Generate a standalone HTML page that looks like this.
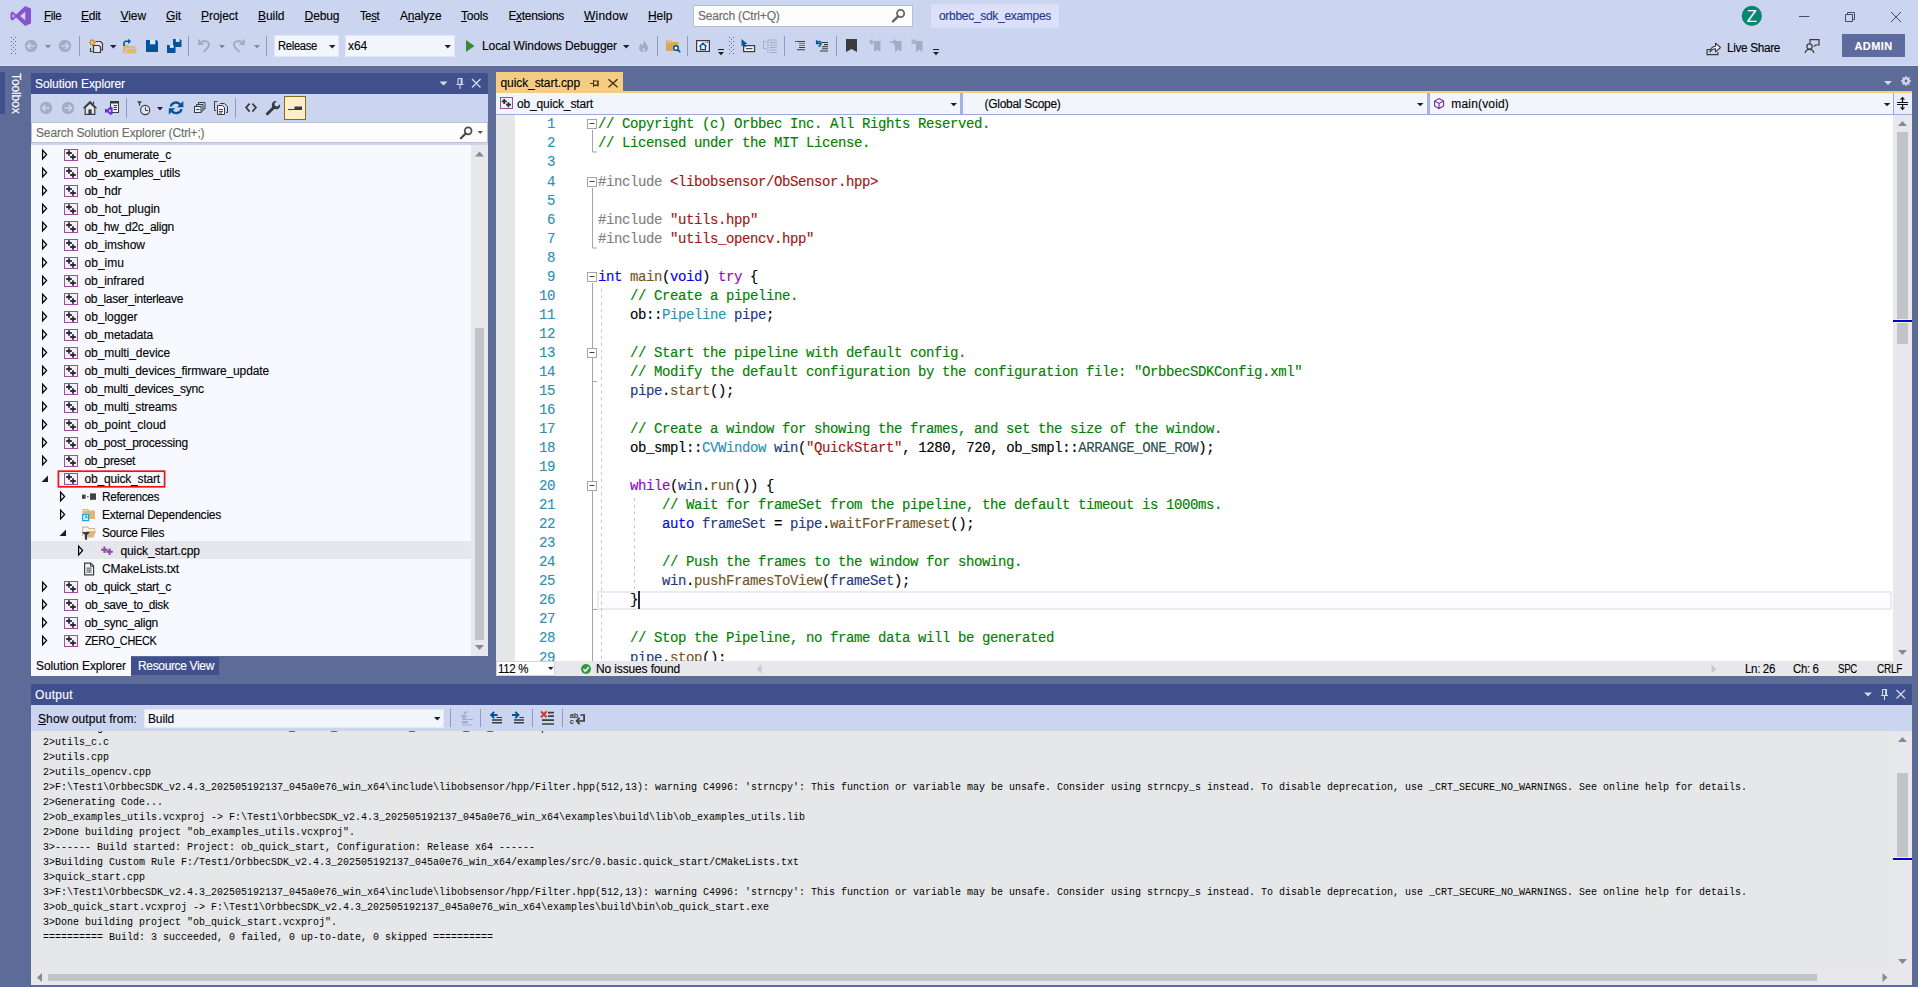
<!DOCTYPE html>
<html lang="en"><head><meta charset="utf-8"><title>orbbec_sdk_exampes - Microsoft Visual Studio</title>
<style>
html,body{margin:0;padding:0;overflow:hidden;}
body{width:1918px;height:987px;overflow:hidden;background:#5d6b99;position:relative;font-family:"Liberation Sans", sans-serif;font-size:12px;}
#r{position:absolute;left:0;top:0;width:1918px;height:987px;overflow:hidden;}
#r div,#r span,#r svg{position:absolute;}
#r svg{overflow:visible;}
.ts,.tm,.to{white-space:pre;line-height:0;height:0;}
.ts{font-family:"Liberation Sans", sans-serif;font-size:12px;margin-top:-4.2px;-webkit-text-stroke:0.12px;}
.tm{font-family:"Liberation Mono", monospace;margin-top:-3.6px;-webkit-text-stroke:0.14px;}
.to{font-family:"Liberation Mono", monospace;margin-top:-3px;transform-origin:0 0;}
.ts i,.tm i,.to i{font-style:normal;}
#r .ts span,#r .tm span,#r .to span,#r u{position:static;}
u{text-decoration:underline;text-underline-offset:1px;}
</style></head>
<body><div id="r">
<div style="left:0px;top:0px;width:1918px;height:66px;background:#ccd5f0;"></div>
<div style="left:0px;top:65px;width:1918px;height:1px;background:#d5dcf2;"></div>
<span class="ts" style="letter-spacing:-0.350px;transform:scaleX(0.9744);transform-origin:0 0;left:43.5px;top:20px;color:#000000;"><u>F</u>ile</span>
<span class="ts" style="letter-spacing:-0.276px;left:81px;top:20px;color:#000000;"><u>E</u>dit</span>
<span class="ts" style="letter-spacing:-0.103px;left:120.6px;top:20px;color:#000000;"><u>V</u>iew</span>
<span class="ts" style="letter-spacing:-0.115px;left:166px;top:20px;color:#000000;"><u>G</u>it</span>
<span class="ts" style="letter-spacing:-0.051px;left:201px;top:20px;color:#000000;"><u>P</u>roject</span>
<span class="ts" style="letter-spacing:-0.061px;left:258px;top:20px;color:#000000;"><u>B</u>uild</span>
<span class="ts" style="letter-spacing:-0.115px;left:304.6px;top:20px;color:#000000;"><u>D</u>ebug</span>
<span class="ts" style="letter-spacing:-0.350px;transform:scaleX(0.9403);transform-origin:0 0;left:360px;top:20px;color:#000000;">Te<u>s</u>t</span>
<span class="ts" style="letter-spacing:-0.188px;left:400px;top:20px;color:#000000;">A<u>n</u>alyze</span>
<span class="ts" style="letter-spacing:-0.203px;left:461px;top:20px;color:#000000;"><u>T</u>ools</span>
<span class="ts" style="letter-spacing:-0.312px;left:508.4px;top:20px;color:#000000;">E<u>x</u>tensions</span>
<span class="ts" style="letter-spacing:0.219px;left:584px;top:20px;color:#000000;"><u>W</u>indow</span>
<span class="ts" style="letter-spacing:-0.072px;left:648px;top:20px;color:#000000;"><u>H</u>elp</span>
<div style="left:693px;top:5px;width:220px;height:22px;background:#fdfdfd;box-sizing:border-box;border:1px solid #b5bdd3;box-shadow:inset 0 0 0 1px #fff;"></div>
<span class="ts" style="letter-spacing:-0.184px;left:698px;top:20px;color:#6a6a6a;">Search (Ctrl+Q)</span>
<div style="left:931px;top:4px;width:128px;height:24px;background:#dce0f8;box-sizing:border-box;border:1px solid #d6dcf4;"></div>
<span class="ts" style="letter-spacing:-0.300px;left:939px;top:20px;color:#263a8c;">orbbec_sdk_exampes</span>
<div style="left:274px;top:35px;width:64.5px;height:21.5px;background:#f2f5fc;box-sizing:border-box;border:1px solid #e2e7f8;"></div>
<span class="ts" style="letter-spacing:-0.350px;transform:scaleX(0.9379);transform-origin:0 0;left:278px;top:50.5px;color:#000000;">Release</span>
<div style="left:345px;top:35px;width:110px;height:21.5px;background:#f2f5fc;box-sizing:border-box;border:1px solid #e2e7f8;"></div>
<span class="ts" style="letter-spacing:-0.120px;left:348px;top:50.5px;color:#000000;">x64</span>
<span class="ts" style="letter-spacing:-0.080px;left:482px;top:50.5px;color:#000000;">Local Windows Debugger</span>
<span class="ts" style="letter-spacing:-0.350px;transform:scaleX(0.9838);transform-origin:0 0;left:1727px;top:52px;color:#000000;">Live Share</span>
<div style="left:1842px;top:34px;width:63px;height:23px;background:#5d6b9e;"></div>
<span class="ts" style="letter-spacing:0.388px;left:1854.5px;top:50px;color:#ffffff;font-size:11px;font-weight:bold;margin-top:-3.8px;">ADMIN</span>
<div style="left:0px;top:72px;width:5px;height:42px;background:#40508d;"></div>
<span class="ts" style="left:16px;top:72.5px;color:#fff;transform-origin:0 0;transform:rotate(90deg);margin-top:0;letter-spacing:-0.12px">Toolbox</span>
<div style="left:31px;top:73px;width:457px;height:21px;background:#40508d;"></div>
<span class="ts" style="letter-spacing:-0.082px;left:35px;top:88px;color:#ffffff;">Solution Explorer</span>
<div style="left:31px;top:94px;width:457px;height:28px;background:#ccd5f0;"></div>
<div style="left:31px;top:122px;width:457px;height:21px;background:#fdfdfd;box-sizing:border-box;border:1px solid #b9c1d6;box-shadow:inset 0 0 0 1px #fff;"></div>
<span class="ts" style="letter-spacing:-0.139px;left:36px;top:137px;color:#6a6a6a;">Search Solution Explorer (Ctrl+;)</span>
<div style="left:31px;top:143px;width:457px;height:2px;background:#ccd5f0;"></div>
<div style="left:31px;top:145px;width:457px;height:511px;background:#f7f9fe;"></div>
<div style="left:471px;top:145px;width:17px;height:511px;background:#e8e8ec;"></div>
<div style="left:475px;top:328px;width:9px;height:312px;background:#c2c3c9;"></div>
<span class="ts" style="letter-spacing:-0.256px;left:84.5px;top:159.5px;color:#000000;">ob_enumerate_c</span>
<span class="ts" style="letter-spacing:-0.230px;left:84.5px;top:177.5px;color:#000000;">ob_examples_utils</span>
<span class="ts" style="letter-spacing:-0.062px;left:84.5px;top:195.5px;color:#000000;">ob_hdr</span>
<span class="ts" style="letter-spacing:0.007px;left:84.5px;top:213.5px;color:#000000;">ob_hot_plugin</span>
<span class="ts" style="letter-spacing:-0.261px;left:84.5px;top:231.5px;color:#000000;">ob_hw_d2c_align</span>
<span class="ts" style="letter-spacing:-0.023px;left:84.5px;top:249.5px;color:#000000;">ob_imshow</span>
<span class="ts" style="letter-spacing:0.023px;left:84.5px;top:267.5px;color:#000000;">ob_imu</span>
<span class="ts" style="letter-spacing:-0.111px;left:84.5px;top:285.5px;color:#000000;">ob_infrared</span>
<span class="ts" style="letter-spacing:-0.329px;left:84.5px;top:303.5px;color:#000000;">ob_laser_interleave</span>
<span class="ts" style="letter-spacing:-0.043px;left:84.5px;top:321.5px;color:#000000;">ob_logger</span>
<span class="ts" style="letter-spacing:-0.142px;left:84.5px;top:339.5px;color:#000000;">ob_metadata</span>
<span class="ts" style="letter-spacing:-0.081px;left:84.5px;top:357.5px;color:#000000;">ob_multi_device</span>
<span class="ts" style="letter-spacing:-0.134px;left:84.5px;top:375.5px;color:#000000;">ob_multi_devices_firmware_update</span>
<span class="ts" style="letter-spacing:-0.232px;left:84.5px;top:393.5px;color:#000000;">ob_multi_devices_sync</span>
<span class="ts" style="letter-spacing:-0.139px;left:84.5px;top:411.5px;color:#000000;">ob_multi_streams</span>
<span class="ts" style="letter-spacing:0.007px;left:84.5px;top:429.5px;color:#000000;">ob_point_cloud</span>
<span class="ts" style="letter-spacing:-0.218px;left:84.5px;top:447.5px;color:#000000;">ob_post_processing</span>
<span class="ts" style="letter-spacing:-0.319px;left:84.5px;top:465.5px;color:#000000;">ob_preset</span>
<span class="ts" style="letter-spacing:-0.182px;left:84.5px;top:483.5px;color:#000000;">ob_quick_start</span>
<span class="ts" style="letter-spacing:-0.350px;transform:scaleX(0.9849);transform-origin:0 0;left:102px;top:501.5px;color:#000000;">References</span>
<span class="ts" style="letter-spacing:-0.242px;left:102px;top:519.5px;color:#000000;">External Dependencies</span>
<span class="ts" style="letter-spacing:-0.350px;transform:scaleX(0.9920);transform-origin:0 0;left:102px;top:537.5px;color:#000000;">Source Files</span>
<div style="left:31px;top:541px;width:440px;height:18px;background:#e6e7ed;"></div>
<span class="ts" style="letter-spacing:-0.075px;left:120.4px;top:555.5px;color:#000000;">quick_start.cpp</span>
<span class="ts" style="letter-spacing:-0.121px;left:102px;top:573.5px;color:#000000;">CMakeLists.txt</span>
<span class="ts" style="letter-spacing:-0.265px;left:84.5px;top:591.5px;color:#000000;">ob_quick_start_c</span>
<span class="ts" style="letter-spacing:-0.350px;transform:scaleX(0.9843);transform-origin:0 0;left:84.5px;top:609.5px;color:#000000;">ob_save_to_disk</span>
<span class="ts" style="letter-spacing:-0.249px;left:84.5px;top:627.5px;color:#000000;">ob_sync_align</span>
<span class="ts" style="letter-spacing:-0.350px;transform:scaleX(0.9106);transform-origin:0 0;left:84.5px;top:645.5px;color:#000000;">ZERO_CHECK</span>
<div style="left:31px;top:656px;width:100px;height:20px;background:#f7f9fe;"></div>
<span class="ts" style="letter-spacing:-0.082px;left:36px;top:670px;color:#000000;">Solution Explorer</span>
<div style="left:131px;top:657px;width:88px;height:18px;background:#40508d;"></div>
<span class="ts" style="letter-spacing:-0.345px;left:138px;top:670px;color:#ffffff;">Resource View</span>
<div style="left:496px;top:72px;width:127px;height:20px;background:#f5cc84;"></div>
<span class="ts" style="letter-spacing:-0.081px;left:500.5px;top:87px;color:#000000;">quick_start.cpp</span>
<div style="left:496px;top:91px;width:1416px;height:2px;background:#f5cc84;"></div>
<div style="left:496px;top:93px;width:1416px;height:22px;background:#f2f5fc;"></div>
<div style="left:496px;top:113.5px;width:1416px;height:1.5px;background:#9aaade;"></div>
<div style="left:960px;top:93px;width:3px;height:21px;background:#a3b1de;"></div>
<div style="left:1426.5px;top:93px;width:3px;height:21px;background:#a3b1de;"></div>
<div style="left:1893px;top:93px;width:19px;height:20.5px;background:#e9eefc;box-sizing:border-box;border-left:1px solid #9aaade;"></div>
<span class="ts" style="letter-spacing:-0.146px;left:517px;top:108px;color:#000000;">ob_quick_start</span>
<span class="ts" style="letter-spacing:-0.289px;left:984.5px;top:108px;color:#000000;">(Global Scope)</span>
<span class="ts" style="letter-spacing:0.168px;left:1451.3px;top:108px;color:#000000;">main(void)</span>
<div style="left:496px;top:115px;width:1397px;height:546px;background:#ffffff;"></div>
<div style="left:496px;top:115px;width:18.5px;height:546px;background:#e6e7e8;"></div>
<div style="left:1893px;top:115px;width:19px;height:546px;background:#e8e8ec;"></div>
<div style="left:1897px;top:132px;width:11px;height:212px;background:#c2c3c9;"></div>
<div style="left:1893px;top:319px;width:19px;height:4px;background:#f4f4e4;"></div>
<div style="left:1893px;top:320px;width:19px;height:2px;background:#0000cd;"></div>
<div style="left:496px;top:661px;width:1416px;height:15px;background:#e8e8ec;"></div>
<div style="left:496px;top:661px;width:59px;height:15px;background:#ffffff;box-sizing:border-box;border:1px solid #cfd3e6;"></div>
<span class="ts" style="letter-spacing:-0.350px;transform:scaleX(0.9557);transform-origin:0 0;left:498px;top:673px;color:#000000;">112 %</span>
<span class="ts" style="letter-spacing:-0.138px;left:596px;top:673px;color:#000000;">No issues found</span>
<span class="ts" style="letter-spacing:-0.350px;transform:scaleX(0.9592);transform-origin:0 0;left:1745px;top:673px;color:#000000;">Ln: 26</span>
<span class="ts" style="letter-spacing:-0.350px;transform:scaleX(0.9503);transform-origin:0 0;left:1793.4px;top:673px;color:#000000;">Ch: 6</span>
<span class="ts" style="letter-spacing:-0.350px;transform:scaleX(0.8038);transform-origin:0 0;left:1838px;top:673px;color:#000000;">SPC</span>
<span class="ts" style="letter-spacing:-0.350px;transform:scaleX(0.8349);transform-origin:0 0;left:1877px;top:673px;color:#000000;">CRLF</span>
<div style="left:597px;top:591px;width:1295px;height:19px;background:#fdfdff;box-sizing:border-box;border:2px solid #eaeaf2;"></div>
<div id="code" style="left:496px;top:115px;width:1397px;height:546px;overflow:hidden">
<span class="tm" style="left:19px;width:40px;text-align:right;top:12.50px;color:#2b91af;font-size:14px;letter-spacing:-0.4px">1</span>
<span class="tm" style="left:102px;top:12.50px;color:#000;font-size:14px;letter-spacing:-0.4px"><span style="color:#008000">// Copyright (c) Orbbec Inc. All Rights Reserved.</span></span>
<span class="tm" style="left:19px;width:40px;text-align:right;top:31.50px;color:#2b91af;font-size:14px;letter-spacing:-0.4px">2</span>
<span class="tm" style="left:102px;top:31.50px;color:#000;font-size:14px;letter-spacing:-0.4px"><span style="color:#008000">// Licensed under the MIT License.</span></span>
<span class="tm" style="left:19px;width:40px;text-align:right;top:50.50px;color:#2b91af;font-size:14px;letter-spacing:-0.4px">3</span>
<span class="tm" style="left:19px;width:40px;text-align:right;top:70.50px;color:#2b91af;font-size:14px;letter-spacing:-0.4px">4</span>
<span class="tm" style="left:102px;top:70.50px;color:#000;font-size:14px;letter-spacing:-0.4px"><span style="color:#808080">#include </span><span style="color:#a31515">&lt;libobsensor/ObSensor.hpp&gt;</span></span>
<span class="tm" style="left:19px;width:40px;text-align:right;top:89.50px;color:#2b91af;font-size:14px;letter-spacing:-0.4px">5</span>
<span class="tm" style="left:19px;width:40px;text-align:right;top:108.50px;color:#2b91af;font-size:14px;letter-spacing:-0.4px">6</span>
<span class="tm" style="left:102px;top:108.50px;color:#000;font-size:14px;letter-spacing:-0.4px"><span style="color:#808080">#include </span><span style="color:#a31515">"utils.hpp"</span></span>
<span class="tm" style="left:19px;width:40px;text-align:right;top:127.50px;color:#2b91af;font-size:14px;letter-spacing:-0.4px">7</span>
<span class="tm" style="left:102px;top:127.50px;color:#000;font-size:14px;letter-spacing:-0.4px"><span style="color:#808080">#include </span><span style="color:#a31515">"utils_opencv.hpp"</span></span>
<span class="tm" style="left:19px;width:40px;text-align:right;top:146.50px;color:#2b91af;font-size:14px;letter-spacing:-0.4px">8</span>
<span class="tm" style="left:19px;width:40px;text-align:right;top:165.50px;color:#2b91af;font-size:14px;letter-spacing:-0.4px">9</span>
<span class="tm" style="left:102px;top:165.50px;color:#000;font-size:14px;letter-spacing:-0.4px"><span style="color:#0000ff">int</span> <span style="color:#74531f">main</span>(<span style="color:#0000ff">void</span>) <span style="color:#8f08c4">try</span> {</span>
<span class="tm" style="left:19px;width:40px;text-align:right;top:184.50px;color:#2b91af;font-size:14px;letter-spacing:-0.4px">10</span>
<span class="tm" style="left:102px;top:184.50px;color:#000;font-size:14px;letter-spacing:-0.4px">    <span style="color:#008000">// Create a pipeline.</span></span>
<span class="tm" style="left:19px;width:40px;text-align:right;top:203.50px;color:#2b91af;font-size:14px;letter-spacing:-0.4px">11</span>
<span class="tm" style="left:102px;top:203.50px;color:#000;font-size:14px;letter-spacing:-0.4px">    ob::<span style="color:#2b91af">Pipeline</span> <span style="color:#1f377f">pipe</span>;</span>
<span class="tm" style="left:19px;width:40px;text-align:right;top:222.50px;color:#2b91af;font-size:14px;letter-spacing:-0.4px">12</span>
<span class="tm" style="left:19px;width:40px;text-align:right;top:241.50px;color:#2b91af;font-size:14px;letter-spacing:-0.4px">13</span>
<span class="tm" style="left:102px;top:241.50px;color:#000;font-size:14px;letter-spacing:-0.4px">    <span style="color:#008000">// Start the pipeline with default config.</span></span>
<span class="tm" style="left:19px;width:40px;text-align:right;top:260.50px;color:#2b91af;font-size:14px;letter-spacing:-0.4px">14</span>
<span class="tm" style="left:102px;top:260.50px;color:#000;font-size:14px;letter-spacing:-0.4px">    <span style="color:#008000">// Modify the default configuration by the configuration file: "OrbbecSDKConfig.xml"</span></span>
<span class="tm" style="left:19px;width:40px;text-align:right;top:279.50px;color:#2b91af;font-size:14px;letter-spacing:-0.4px">15</span>
<span class="tm" style="left:102px;top:279.50px;color:#000;font-size:14px;letter-spacing:-0.4px">    <span style="color:#1f377f">pipe</span>.<span style="color:#74531f">start</span>();</span>
<span class="tm" style="left:19px;width:40px;text-align:right;top:298.50px;color:#2b91af;font-size:14px;letter-spacing:-0.4px">16</span>
<span class="tm" style="left:19px;width:40px;text-align:right;top:317.50px;color:#2b91af;font-size:14px;letter-spacing:-0.4px">17</span>
<span class="tm" style="left:102px;top:317.50px;color:#000;font-size:14px;letter-spacing:-0.4px">    <span style="color:#008000">// Create a window for showing the frames, and set the size of the window.</span></span>
<span class="tm" style="left:19px;width:40px;text-align:right;top:336.50px;color:#2b91af;font-size:14px;letter-spacing:-0.4px">18</span>
<span class="tm" style="left:102px;top:336.50px;color:#000;font-size:14px;letter-spacing:-0.4px">    ob_smpl::<span style="color:#2b91af">CVWindow</span> <span style="color:#1f377f">win</span>(<span style="color:#a31515">"QuickStart"</span>, 1280, 720, ob_smpl::<span style="color:#2f4f4f">ARRANGE_ONE_ROW</span>);</span>
<span class="tm" style="left:19px;width:40px;text-align:right;top:355.50px;color:#2b91af;font-size:14px;letter-spacing:-0.4px">19</span>
<span class="tm" style="left:19px;width:40px;text-align:right;top:374.50px;color:#2b91af;font-size:14px;letter-spacing:-0.4px">20</span>
<span class="tm" style="left:102px;top:374.50px;color:#000;font-size:14px;letter-spacing:-0.4px">    <span style="color:#8f08c4">while</span>(<span style="color:#1f377f">win</span>.<span style="color:#74531f">run</span>()) {</span>
<span class="tm" style="left:19px;width:40px;text-align:right;top:393.50px;color:#2b91af;font-size:14px;letter-spacing:-0.4px">21</span>
<span class="tm" style="left:102px;top:393.50px;color:#000;font-size:14px;letter-spacing:-0.4px">        <span style="color:#008000">// Wait for frameSet from the pipeline, the default timeout is 1000ms.</span></span>
<span class="tm" style="left:19px;width:40px;text-align:right;top:412.50px;color:#2b91af;font-size:14px;letter-spacing:-0.4px">22</span>
<span class="tm" style="left:102px;top:412.50px;color:#000;font-size:14px;letter-spacing:-0.4px">        <span style="color:#0000ff">auto</span> <span style="color:#1f377f">frameSet</span> = <span style="color:#1f377f">pipe</span>.<span style="color:#74531f">waitForFrameset</span>();</span>
<span class="tm" style="left:19px;width:40px;text-align:right;top:431.50px;color:#2b91af;font-size:14px;letter-spacing:-0.4px">23</span>
<span class="tm" style="left:19px;width:40px;text-align:right;top:450.50px;color:#2b91af;font-size:14px;letter-spacing:-0.4px">24</span>
<span class="tm" style="left:102px;top:450.50px;color:#000;font-size:14px;letter-spacing:-0.4px">        <span style="color:#008000">// Push the frames to the window for showing.</span></span>
<span class="tm" style="left:19px;width:40px;text-align:right;top:469.50px;color:#2b91af;font-size:14px;letter-spacing:-0.4px">25</span>
<span class="tm" style="left:102px;top:469.50px;color:#000;font-size:14px;letter-spacing:-0.4px">        <span style="color:#1f377f">win</span>.<span style="color:#74531f">pushFramesToView</span>(<span style="color:#1f377f">frameSet</span>);</span>
<span class="tm" style="left:19px;width:40px;text-align:right;top:488.50px;color:#2b91af;font-size:14px;letter-spacing:-0.4px">26</span>
<span class="tm" style="left:102px;top:488.50px;color:#000;font-size:14px;letter-spacing:-0.4px">    }</span>
<span class="tm" style="left:19px;width:40px;text-align:right;top:507.50px;color:#2b91af;font-size:14px;letter-spacing:-0.4px">27</span>
<span class="tm" style="left:19px;width:40px;text-align:right;top:526.50px;color:#2b91af;font-size:14px;letter-spacing:-0.4px">28</span>
<span class="tm" style="left:102px;top:526.50px;color:#000;font-size:14px;letter-spacing:-0.4px">    <span style="color:#008000">// Stop the Pipeline, no frame data will be generated</span></span>
<span class="tm" style="left:19px;width:40px;text-align:right;top:546.50px;color:#2b91af;font-size:14px;letter-spacing:-0.4px">29</span>
<span class="tm" style="left:102px;top:546.50px;color:#000;font-size:14px;letter-spacing:-0.4px">    <span style="color:#1f377f">pipe</span>.<span style="color:#74531f">stop</span>();</span>
</div>
<div style="left:638px;top:591px;width:2px;height:18px;background:#2a2a2a;"></div>
<div style="left:31px;top:684px;width:1881px;height:21px;background:#40508d;"></div>
<span class="ts" style="letter-spacing:0.328px;left:35px;top:699.5px;color:#ffffff;">Output</span>
<div style="left:31px;top:705px;width:1881px;height:26px;background:#ccd5f0;"></div>
<span class="ts" style="letter-spacing:0.094px;left:38px;top:723px;color:#000000;"><u>S</u>how output from:</span>
<div style="left:144px;top:708.5px;width:299.5px;height:19px;background:#f2f5fc;box-sizing:border-box;border:1px solid #e2e7f8;"></div>
<span class="ts" style="letter-spacing:-0.138px;left:148px;top:723px;color:#000000;">Build</span>
<div style="left:31px;top:731px;width:1881px;height:254px;background:#e6e7e8;"></div>
<div style="left:1893px;top:731px;width:19px;height:238px;background:#e8e8ec;"></div>
<div style="left:31px;top:969px;width:1881px;height:16px;background:#e8e8ec;"></div>
<div style="left:1897px;top:773px;width:11px;height:85px;background:#c2c3c9;"></div>
<div style="left:1893px;top:857px;width:19px;height:4px;background:#f4f4e4;"></div>
<div style="left:1893px;top:858px;width:19px;height:2px;background:#0000cd;"></div>
<div style="left:48px;top:974px;width:1769px;height:7px;background:#c2c3c9;"></div>
<div id="out" style="left:31px;top:731px;width:1862px;height:238px;overflow:hidden">
<span class="to" style="transform:scaleX(0.8694);left:12px;top:0px;color:#000;font-size:11.5px;">2&gt;Building Custom Rule F:/Test1/OrbbecSDK_v2.4.3_202505192137_045a0e76_win_x64/examples/src/utils/CMakeLists.txt</span>
<span class="to" style="transform:scaleX(0.8693);left:12px;top:14px;color:#000;font-size:11.5px;">2&gt;utils_c.c</span>
<span class="to" style="transform:scaleX(0.8693);left:12px;top:29px;color:#000;font-size:11.5px;">2&gt;utils.cpp</span>
<span class="to" style="transform:scaleX(0.8693);left:12px;top:44px;color:#000;font-size:11.5px;">2&gt;utils_opencv.cpp</span>
<span class="to" style="transform:scaleX(0.8694);left:12px;top:59px;color:#000;font-size:11.5px;">2&gt;F:\Test1\OrbbecSDK_v2.4.3_202505192137_045a0e76_win_x64\include\libobsensor/hpp/Filter.hpp(512,13): warning C4996: 'strncpy': This function or variable may be unsafe. Consider using strncpy_s instead. To disable deprecation, use _CRT_SECURE_NO_WARNINGS. See online help for details.</span>
<span class="to" style="transform:scaleX(0.8694);left:12px;top:74px;color:#000;font-size:11.5px;">2&gt;Generating Code...</span>
<span class="to" style="transform:scaleX(0.8694);left:12px;top:89px;color:#000;font-size:11.5px;">2&gt;ob_examples_utils.vcxproj -&gt; F:\Test1\OrbbecSDK_v2.4.3_202505192137_045a0e76_win_x64\examples\build\lib\ob_examples_utils.lib</span>
<span class="to" style="transform:scaleX(0.8694);left:12px;top:104px;color:#000;font-size:11.5px;">2&gt;Done building project "ob_examples_utils.vcxproj".</span>
<span class="to" style="transform:scaleX(0.8694);left:12px;top:119px;color:#000;font-size:11.5px;">3&gt;------ Build started: Project: ob_quick_start, Configuration: Release x64 ------</span>
<span class="to" style="transform:scaleX(0.8694);left:12px;top:134px;color:#000;font-size:11.5px;">3&gt;Building Custom Rule F:/Test1/OrbbecSDK_v2.4.3_202505192137_045a0e76_win_x64/examples/src/0.basic.quick_start/CMakeLists.txt</span>
<span class="to" style="transform:scaleX(0.8694);left:12px;top:149px;color:#000;font-size:11.5px;">3&gt;quick_start.cpp</span>
<span class="to" style="transform:scaleX(0.8694);left:12px;top:164px;color:#000;font-size:11.5px;">3&gt;F:\Test1\OrbbecSDK_v2.4.3_202505192137_045a0e76_win_x64\include\libobsensor/hpp/Filter.hpp(512,13): warning C4996: 'strncpy': This function or variable may be unsafe. Consider using strncpy_s instead. To disable deprecation, use _CRT_SECURE_NO_WARNINGS. See online help for details.</span>
<span class="to" style="transform:scaleX(0.8694);left:12px;top:179px;color:#000;font-size:11.5px;">3&gt;ob_quick_start.vcxproj -&gt; F:\Test1\OrbbecSDK_v2.4.3_202505192137_045a0e76_win_x64\examples\build\bin\ob_quick_start.exe</span>
<span class="to" style="transform:scaleX(0.8694);left:12px;top:194px;color:#000;font-size:11.5px;">3&gt;Done building project "ob_quick_start.vcxproj".</span>
<span class="to" style="transform:scaleX(0.8694);left:12px;top:209px;color:#000;font-size:11.5px;">========== Build: 3 succeeded, 0 failed, 0 up-to-date, 0 skipped ==========</span>
</div>
<svg style="left:0;top:0" width="1918" height="987" viewBox="0 0 1918 987"><g transform="translate(10.5 6)"><path d="M14.6 0 L20.5 2.4 V17.6 L14.6 20 L5.6 11.6 L2.2 14.4 L0 13.3 V6.7 L2.2 5.6 L5.6 8.4 Z M14.8 5.8 L9.6 10 L14.8 14.2 Z M2.2 8 V12 L4.3 10 Z" fill="#8655cb" fill-rule="evenodd"/></g>
<g transform="translate(892 8.9)"><g transform="scale(1.0)"><circle cx="8.6" cy="4.6" r="3.6" fill="none" stroke="#666" stroke-width="1.8"/><path d="M6 7.4 L1 12.4" stroke="#666" stroke-width="2.4" stroke-linecap="round"/></g></g>
<circle cx="1751.8" cy="15.9" r="10.1" fill="#078571"/>
<text x="1751.8" y="21.9" text-anchor="middle" font-family="Liberation Sans, sans-serif" font-size="16.5" fill="#fff">Z</text>
<path d="M1799 16.5h10.3" stroke="#3f4a78" stroke-width="1"/>
<path d="M1845.5 14.5h7v7h-7z M1847.5 14.5v-2h7v7h-2" fill="none" stroke="#3f4a78" stroke-width="1"/>
<path d="M1891 12l10 10M1901 12l-10 10" stroke="#3f4a78" stroke-width="1"/>
<g fill="#5d6b99"><rect x="11" y="37" width="1" height="1"/><rect x="15" y="37" width="1" height="1"/><rect x="13" y="39" width="1" height="1"/><rect x="11" y="41" width="1" height="1"/><rect x="15" y="41" width="1" height="1"/><rect x="13" y="43" width="1" height="1"/><rect x="11" y="45" width="1" height="1"/><rect x="15" y="45" width="1" height="1"/><rect x="13" y="47" width="1" height="1"/><rect x="11" y="49" width="1" height="1"/><rect x="15" y="49" width="1" height="1"/><rect x="13" y="51" width="1" height="1"/><rect x="11" y="53" width="1" height="1"/><rect x="15" y="53" width="1" height="1"/></g>
<circle cx="31" cy="46" r="6.2" fill="#a6abc4"/><path d="M34.5 46h-6.5M30.5 43l-3 3l3 3" fill="none" stroke="#ccd5f0" stroke-width="1.7"/>
<path d="M45 45h6l-3.0 3.5z" fill="#8a8a8a"/>
<circle cx="65" cy="46" r="6.2" fill="#a6abc4"/><path d="M61.5 46h6.5M65.5 43l3 3l-3 3" fill="none" stroke="#ccd5f0" stroke-width="1.7"/>
<path d="M79.5 36V56" stroke="#8e9bc5" stroke-width="1"/>
<g transform="translate(89 39)"><path d="M6.5 2.5h5l2 2v6.5h-2" fill="#e4e4f4" stroke="#3b3b3b" stroke-width="1.2"/><path d="M4.5 6.5h5.5l1.5 1.5v5.5h-7z" fill="#e4e4f4" stroke="#3b3b3b" stroke-width="1.2"/><path d="M1.5 9v3.5h2" fill="none" stroke="#3b3b3b" stroke-width="1.1"/><path d="M3.3 0v7M0 3.5h6.6M1 1.2l4.6 4.6M5.6 1.2L1 5.8" stroke="#c27d1a" stroke-width="1.1"/><circle cx="3.3" cy="3.5" r="1.3" fill="#f6d9a0"/></g>
<path d="M110 45h6.5l-3.25 3.5z" fill="#1e1e3c"/>
<g transform="translate(122.5 39)"><path d="M0.5 14.5V6h5l1.2 1.3h6.3v1.6H4.2L1.6 14.5z" fill="#dcb67a"/><path d="M3 14.5L5 9.5h9.6L12.6 14.5z" fill="#e2b76c"/><path d="M1.5 7V4.2a2 2 0 0 1 2-2H7" fill="none" stroke="#00539c" stroke-width="1.6"/><path d="M5.6 -0.3L8.6 2.3L5.6 4.9z" fill="#00539c"/></g>
<g transform="translate(146 40)"><path d="M0 0H10.5L12 1.5V12H0z" fill="#00539c"/><rect x="3.96" y="0" width="5.4" height="4.32" fill="#dfe3f5"/></g>
<g transform="translate(173 39)"><path d="M0 0H7.0L8.5 1.5V8H0z" fill="#00539c"/><rect x="2.805" y="0" width="3.825" height="2.88" fill="#dfe3f5"/></g>
<g transform="translate(167 45)"><path d="M0 0H7.0L8.5 1.5V8H0z" fill="#00539c"/><rect x="2.805" y="0" width="3.825" height="2.88" fill="#dfe3f5"/></g>
<path d="M188.5 36V56" stroke="#8e9bc5" stroke-width="1"/>
<g transform="translate(198 39)"><path d="M1 0.5v4.5h4.5" fill="none" stroke="#a6abc4" stroke-width="1.8"/><path d="M1.5 4.5C4 1.5 9 1 10.8 4.2C12 7 9 9.5 5.5 13" fill="none" stroke="#a6abc4" stroke-width="1.9"/></g>
<path d="M219 45h6l-3.0 3.5z" fill="#8a8a8a"/>
<g transform="translate(233 39)"><path d="M11 0.5v4.5h-4.5" fill="none" stroke="#a6abc4" stroke-width="1.8"/><path d="M10.5 4.5C8 1.5 3 1 1.2 4.2C0 7 3 9.5 6.5 13" fill="none" stroke="#a6abc4" stroke-width="1.9"/></g>
<path d="M254 45h6l-3.0 3.5z" fill="#8a8a8a"/>
<path d="M266.5 36V56" stroke="#8e9bc5" stroke-width="1"/>
<path d="M329 45h6.5l-3.25 3.5z" fill="#1e1e1e"/>
<path d="M444.5 45h6.5l-3.25 3.5z" fill="#1e1e1e"/>
<path d="M466 40V52L474.5 46z" fill="#388a34"/>
<path d="M623 45h6.5l-3.25 3.5z" fill="#1e1e1e"/>
<g transform="translate(639 40)"><path d="M4.5 0C6 2.5 9 4.5 9 8.2C9 10.6 7.2 12 4.8 12C2 12 0 10.5 0 8C0 6 1.2 5 1.6 3.4C2.6 4 3 5 3.2 6C4.4 4.4 4.8 2.4 4.5 0z" fill="#a6abc4"/><path d="M4.8 12C3.4 11 3.2 9.4 4.6 7.6C6 9.4 6.2 11 4.8 12z" fill="#ccd5f0"/></g>
<path d="M657.5 36V56" stroke="#8e9bc5" stroke-width="1"/>
<g transform="translate(666 40)"><path d="M0 0.5h5l1.2 1.5h6.3v9H0z" fill="#dca658"/><path d="M1 2h4" stroke="#f3dcae" stroke-width="1"/><circle cx="10" cy="8" r="2.3" fill="#f2f5fc" stroke="#00539c" stroke-width="1.5"/><path d="M11.8 9.8l2.4 2.4" stroke="#00539c" stroke-width="1.8"/></g>
<path d="M687.5 36V56" stroke="#8e9bc5" stroke-width="1"/>
<g transform="translate(696 40)"><rect x="0.6" y="0.6" width="12.8" height="10.8" fill="#eef0fa" stroke="#3b3b3b" stroke-width="1.2"/><path d="M3.5 6.5L7 3.2L10.5 6.5M4.6 6v3.6h4.8V6" fill="none" stroke="#00539c" stroke-width="1.3"/><rect x="9.5" y="1.8" width="1" height="1" fill="#3b3b3b"/><rect x="11.2" y="1.8" width="1" height="1" fill="#3b3b3b"/></g>
<path d="M718 49.5h6" stroke="#1e1e1e" stroke-width="1"/>
<path d="M718 52.0h6l-3.0 3.2z" fill="#1e1e1e"/>
<g fill="#5d6b99"><rect x="729" y="37" width="1" height="1"/><rect x="733" y="37" width="1" height="1"/><rect x="731" y="39" width="1" height="1"/><rect x="729" y="41" width="1" height="1"/><rect x="733" y="41" width="1" height="1"/><rect x="731" y="43" width="1" height="1"/><rect x="729" y="45" width="1" height="1"/><rect x="733" y="45" width="1" height="1"/><rect x="731" y="47" width="1" height="1"/><rect x="729" y="49" width="1" height="1"/><rect x="733" y="49" width="1" height="1"/><rect x="731" y="51" width="1" height="1"/><rect x="729" y="53" width="1" height="1"/><rect x="733" y="53" width="1" height="1"/></g>
<g transform="translate(741 39)"><rect x="2.6" y="6.6" width="11" height="6" fill="#eef0fa" stroke="#3b3b3b" stroke-width="1.2"/><path d="M5 9.6h6.5" stroke="#3b3b3b" stroke-width="1.1"/><path d="M0.5 0v7.5l2-1.8l1.6 2.6l1.2-0.8l-1.5-2.4h2.6z" fill="#00539c"/></g>
<g transform="translate(763 39)"><path d="M5 1h9M7 3.5h7M7 6h7M7 8.5h7M7 11h7M7 13.5h7" stroke="#a6abc4" stroke-width="1"/><path d="M5 0.5v13.5" stroke="#a6abc4" stroke-width="1"/><path d="M3.5 2.5h-3v7h3" fill="none" stroke="#a6abc4" stroke-width="1"/></g>
<path d="M784.5 36V56" stroke="#8e9bc5" stroke-width="1"/>
<g transform="translate(795 40)"><path d="M0 1.5h1.5M2 1.5h8M4 7.5h6M2 9.8h8" stroke="#3b3b3b" stroke-width="1.1"/><path d="M4 3.5h6M4 5.5h6" stroke="#3a9a3a" stroke-width="1.1"/></g>
<g transform="translate(816 40)"><path d="M6 2.5h6M8 4.6h4M6 6.7h6M6 8.8h6M4 11h8" stroke="#3b3b3b" stroke-width="1.1"/><path d="M0.6 0.2v3.3h3.3" fill="none" stroke="#00539c" stroke-width="1.4"/><path d="M1 3C2.5 0.8 5 1.2 5 3.4C5 4.8 4 5.6 2.6 6.6" fill="none" stroke="#00539c" stroke-width="1.5"/></g>
<path d="M836.5 36V56" stroke="#8e9bc5" stroke-width="1"/>
<g transform="translate(846 39)"><path d="M0 0h11v13l-5.5-3l-5.5 3z" fill="#3b3b3b"/></g>
<g transform="translate(869 39)"><path d="M5 2h6.5v11l-3.2-2.2l-3.3 2.2z" fill="#a6abc4"/><path d="M7 3H1M3.5 0.5L1 3l2.5 2.5" fill="none" stroke="#a6abc4" stroke-width="1.5"/></g>
<g transform="translate(890 39)"><path d="M5 2h6.5v11l-3.2-2.2l-3.3 2.2z" fill="#a6abc4"/><path d="M0 3h6M3.5 0.5L6 3L3.5 5.5" fill="none" stroke="#a6abc4" stroke-width="1.5"/></g>
<g transform="translate(911 39)"><path d="M5 2h6.5v11l-3.2-2.2l-3.3 2.2z" fill="#a6abc4"/><path d="M0.5 0.5l4.5 4.5M5 0.5l-4.5 4.5" fill="none" stroke="#a6abc4" stroke-width="1.6"/></g>
<path d="M933 49.5h6" stroke="#1e1e1e" stroke-width="1"/>
<path d="M933 52.0h6l-3.0 3.2z" fill="#1e1e1e"/>
<g transform="translate(1706.5 42)"><path d="M4 7.5H0.6V12.6H11.4V10" fill="none" stroke="#3b3b3b" stroke-width="1.2"/><path d="M3.5 10C4 6 6.5 4.3 9 4.2V1.2L14 5.5L9 9.8V6.8C6.5 6.8 4.8 8 3.5 10z" fill="#eef0fa" stroke="#3b3b3b" stroke-width="1.1" stroke-linejoin="round"/></g>
<g transform="translate(1804.5 39)"><path d="M5.5 4.5V0.6h9v5.4h-3.5l-1.5 1.6" fill="none" stroke="#3b3b3b" stroke-width="1.2"/><circle cx="5" cy="7.6" r="2.7" fill="none" stroke="#3b3b3b" stroke-width="1.2"/><path d="M0.6 14C1.2 11.6 2.6 10.4 5 10.4S8.8 11.6 9.4 14" fill="none" stroke="#3b3b3b" stroke-width="1.2"/></g>
<path d="M439.5 81.5h8l-4 4z" fill="#d3d9ee"/>
<g transform="translate(456.5 78)"><path d="M1.5 0.5h4v6M1.5 0.5v6M0 6.5h7M3.5 6.5v4.5" fill="none" stroke="#d3d9ee" stroke-width="1.1"/><path d="M4.8 0.5v6" stroke="#d3d9ee" stroke-width="1.4"/></g>
<path d="M472.0 79l8.5 8.5M480.5 79l-8.5 8.5" stroke="#d3d9ee" stroke-width="1.25"/>
<path d="M1864 692.5h8l-4 4z" fill="#d3d9ee"/>
<g transform="translate(1881 689)"><path d="M1.5 0.5h4v6M1.5 0.5v6M0 6.5h7M3.5 6.5v4.5" fill="none" stroke="#d3d9ee" stroke-width="1.1"/><path d="M4.8 0.5v6" stroke="#d3d9ee" stroke-width="1.4"/></g>
<path d="M1896.5 690l8.5 8.5M1905 690l-8.5 8.5" stroke="#d3d9ee" stroke-width="1.25"/>
<circle cx="46" cy="108" r="6.2" fill="#a6abc4"/><path d="M49.5 108h-6.5M45.5 105l-3 3l3 3" fill="none" stroke="#ccd5f0" stroke-width="1.7"/>
<circle cx="68" cy="108" r="6.2" fill="#a6abc4"/><path d="M64.5 108h6.5M68.5 105l3 3l-3 3" fill="none" stroke="#ccd5f0" stroke-width="1.7"/>
<g transform="translate(83 101)"><path d="M0.5 7.2L7 0.8L13.5 7.2" fill="none" stroke="#3b3b3b" stroke-width="1.4"/><path d="M2.2 6.5V13.4H11.8V6.5L7 2z" fill="#e4e4f4" stroke="#3b3b3b" stroke-width="1.2"/><rect x="5.4" y="8.4" width="3.2" height="5" fill="#3b3b3b"/><path d="M10.5 0.5v3" stroke="#3b3b3b" stroke-width="1.2"/></g>
<g transform="translate(105 101)"><rect x="5.5" y="0.5" width="8" height="11" fill="#eef0fa" stroke="#3b3b3b" stroke-width="1"/><rect x="5" y="0" width="9" height="2.5" fill="#3b3b3b"/><path d="M8.5 4.5h3.5M8.5 6.5h3.5M8.5 8.5h3.5" stroke="#3b3b3b" stroke-width="1"/><path d="M5.6 5.6L7.6 6.5V13.1L5.6 14L1.9 11L0.8 11.9L0 11.5V8.1L0.8 7.7L1.9 8.6Z" fill="#6a2fc8"/><path d="M5.6 8.2L3.5 9.8L5.6 11.4Z" fill="#eef0fa"/></g>
<path d="M126.5 98V118" stroke="#8e9bc5" stroke-width="1"/>
<g transform="translate(137 101)"><path d="M0 0.2h5L3.1 2.4v2.4h-1.2V2.4z" fill="#3b3b3b"/><circle cx="8.2" cy="9" r="4.6" fill="#e4e4f4" stroke="#3b3b3b" stroke-width="1.1"/><path d="M8.5 6.2v3.3h2.8" fill="none" stroke="#3b3b3b" stroke-width="1"/></g>
<path d="M157 107h6l-3.0 3.5z" fill="#1e1e3c"/>
<g transform="translate(169 100.5)"><path d="M1.6 6C3 1.6 8.6 0.6 11.6 4.2" fill="none" stroke="#00539c" stroke-width="2.3"/><path d="M14.4 0.4V6.8H8z" fill="#00539c"/><path d="M12.6 8.6C11.2 13 5.6 14 2.6 10.4" fill="none" stroke="#00539c" stroke-width="2.3"/><path d="M-0.2 14.2V7.8H6.2z" fill="#00539c"/></g>
<g transform="translate(194 102)"><path d="M4.5 2V0.5h6.5v6.5h-1.5" fill="none" stroke="#3b3b3b" stroke-width="1"/><path d="M2.5 4V2.5h6.5v6.5h-1.5" fill="none" stroke="#3b3b3b" stroke-width="1"/><rect x="0.5" y="4.5" width="6.5" height="6" fill="#eef0fa" stroke="#3b3b3b" stroke-width="1"/><path d="M2.2 7.5h3.2" stroke="#00539c" stroke-width="1.2"/></g>
<g transform="translate(214 101)"><path d="M3.5 0.5H0.5V9.5H2" fill="none" stroke="#3b3b3b" stroke-width="1"/><path d="M6 2.5h4.5l3 3V11.5h-1.5" fill="none" stroke="#3b3b3b" stroke-width="1"/><path d="M3.5 4.5h5l2 2v7h-7z" fill="#eef0fa" stroke="#3b3b3b" stroke-width="1"/><path d="M5 8.5h4M5 10.5h4M5 12h3" stroke="#3b3b3b" stroke-width="0.9"/></g>
<path d="M235.5 98V118" stroke="#8e9bc5" stroke-width="1"/>
<g transform="translate(245 103)"><path d="M4.6 0.6L1 4.6L4.6 8.6M7.4 0.6L11 4.6L7.4 8.6" fill="none" stroke="#3b3b3b" stroke-width="1.7"/></g>
<g transform="translate(266 101)"><path d="M1.4 12.8L8 6.2" stroke="#3b3b3b" stroke-width="3" stroke-linecap="round"/><path d="M14 3.2L11.4 5.6L9 5L8.4 2.6L10.8 0.2C8.4 -0.6 5.8 1.2 5.8 4C5.8 6.6 8 8.6 10.6 8.3C13.2 8 14.6 5.6 14 3.2z" fill="#3b3b3b"/></g>
<rect x="284.5" y="96.5" width="21" height="23" fill="#fdedc8" stroke="#8f6a16" stroke-width="1"/>
<path d="M288 109.5h14" stroke="#3b3b3b" stroke-width="1"/><rect x="294.5" y="106.5" width="7.5" height="3" fill="#3b3b3b"/>
<g transform="translate(460 126.5)"><g transform="scale(0.95)"><circle cx="8.6" cy="4.6" r="3.6" fill="none" stroke="#4a4a4a" stroke-width="1.8"/><path d="M6 7.4 L1 12.4" stroke="#4a4a4a" stroke-width="2.4" stroke-linecap="round"/></g></g>
<path d="M477.5 131h5.5l-2.75 3z" fill="#5a5a5a"/>
<path d="M42.6 150.1L46.6 154.5L42.6 158.9z" fill="#fbfcff" stroke="#000" stroke-width="1.25" stroke-linejoin="miter"/>
<g transform="translate(64 149.0)"><rect x="0.5" y="0.5" width="13" height="11" fill="#f0f0fa" stroke="#9b4f96" stroke-width="1"/><path d="M5 1.3v5.4M2.2 4h5.6M9 5.2v5.6M6.2 8h5.6" stroke="#2f2f2f" stroke-width="1.8"/></g>
<path d="M42.6 168.1L46.6 172.5L42.6 176.9z" fill="#fbfcff" stroke="#000" stroke-width="1.25" stroke-linejoin="miter"/>
<g transform="translate(64 167.0)"><rect x="0.5" y="0.5" width="13" height="11" fill="#f0f0fa" stroke="#9b4f96" stroke-width="1"/><path d="M5 1.3v5.4M2.2 4h5.6M9 5.2v5.6M6.2 8h5.6" stroke="#2f2f2f" stroke-width="1.8"/></g>
<path d="M42.6 186.1L46.6 190.5L42.6 194.9z" fill="#fbfcff" stroke="#000" stroke-width="1.25" stroke-linejoin="miter"/>
<g transform="translate(64 185.0)"><rect x="0.5" y="0.5" width="13" height="11" fill="#f0f0fa" stroke="#9b4f96" stroke-width="1"/><path d="M5 1.3v5.4M2.2 4h5.6M9 5.2v5.6M6.2 8h5.6" stroke="#2f2f2f" stroke-width="1.8"/></g>
<path d="M42.6 204.1L46.6 208.5L42.6 212.9z" fill="#fbfcff" stroke="#000" stroke-width="1.25" stroke-linejoin="miter"/>
<g transform="translate(64 203.0)"><rect x="0.5" y="0.5" width="13" height="11" fill="#f0f0fa" stroke="#9b4f96" stroke-width="1"/><path d="M5 1.3v5.4M2.2 4h5.6M9 5.2v5.6M6.2 8h5.6" stroke="#2f2f2f" stroke-width="1.8"/></g>
<path d="M42.6 222.1L46.6 226.5L42.6 230.9z" fill="#fbfcff" stroke="#000" stroke-width="1.25" stroke-linejoin="miter"/>
<g transform="translate(64 221.0)"><rect x="0.5" y="0.5" width="13" height="11" fill="#f0f0fa" stroke="#9b4f96" stroke-width="1"/><path d="M5 1.3v5.4M2.2 4h5.6M9 5.2v5.6M6.2 8h5.6" stroke="#2f2f2f" stroke-width="1.8"/></g>
<path d="M42.6 240.1L46.6 244.5L42.6 248.9z" fill="#fbfcff" stroke="#000" stroke-width="1.25" stroke-linejoin="miter"/>
<g transform="translate(64 239.0)"><rect x="0.5" y="0.5" width="13" height="11" fill="#f0f0fa" stroke="#9b4f96" stroke-width="1"/><path d="M5 1.3v5.4M2.2 4h5.6M9 5.2v5.6M6.2 8h5.6" stroke="#2f2f2f" stroke-width="1.8"/></g>
<path d="M42.6 258.1L46.6 262.5L42.6 266.9z" fill="#fbfcff" stroke="#000" stroke-width="1.25" stroke-linejoin="miter"/>
<g transform="translate(64 257.0)"><rect x="0.5" y="0.5" width="13" height="11" fill="#f0f0fa" stroke="#9b4f96" stroke-width="1"/><path d="M5 1.3v5.4M2.2 4h5.6M9 5.2v5.6M6.2 8h5.6" stroke="#2f2f2f" stroke-width="1.8"/></g>
<path d="M42.6 276.1L46.6 280.5L42.6 284.9z" fill="#fbfcff" stroke="#000" stroke-width="1.25" stroke-linejoin="miter"/>
<g transform="translate(64 275.0)"><rect x="0.5" y="0.5" width="13" height="11" fill="#f0f0fa" stroke="#9b4f96" stroke-width="1"/><path d="M5 1.3v5.4M2.2 4h5.6M9 5.2v5.6M6.2 8h5.6" stroke="#2f2f2f" stroke-width="1.8"/></g>
<path d="M42.6 294.1L46.6 298.5L42.6 302.9z" fill="#fbfcff" stroke="#000" stroke-width="1.25" stroke-linejoin="miter"/>
<g transform="translate(64 293.0)"><rect x="0.5" y="0.5" width="13" height="11" fill="#f0f0fa" stroke="#9b4f96" stroke-width="1"/><path d="M5 1.3v5.4M2.2 4h5.6M9 5.2v5.6M6.2 8h5.6" stroke="#2f2f2f" stroke-width="1.8"/></g>
<path d="M42.6 312.1L46.6 316.5L42.6 320.9z" fill="#fbfcff" stroke="#000" stroke-width="1.25" stroke-linejoin="miter"/>
<g transform="translate(64 311.0)"><rect x="0.5" y="0.5" width="13" height="11" fill="#f0f0fa" stroke="#9b4f96" stroke-width="1"/><path d="M5 1.3v5.4M2.2 4h5.6M9 5.2v5.6M6.2 8h5.6" stroke="#2f2f2f" stroke-width="1.8"/></g>
<path d="M42.6 330.1L46.6 334.5L42.6 338.9z" fill="#fbfcff" stroke="#000" stroke-width="1.25" stroke-linejoin="miter"/>
<g transform="translate(64 329.0)"><rect x="0.5" y="0.5" width="13" height="11" fill="#f0f0fa" stroke="#9b4f96" stroke-width="1"/><path d="M5 1.3v5.4M2.2 4h5.6M9 5.2v5.6M6.2 8h5.6" stroke="#2f2f2f" stroke-width="1.8"/></g>
<path d="M42.6 348.1L46.6 352.5L42.6 356.9z" fill="#fbfcff" stroke="#000" stroke-width="1.25" stroke-linejoin="miter"/>
<g transform="translate(64 347.0)"><rect x="0.5" y="0.5" width="13" height="11" fill="#f0f0fa" stroke="#9b4f96" stroke-width="1"/><path d="M5 1.3v5.4M2.2 4h5.6M9 5.2v5.6M6.2 8h5.6" stroke="#2f2f2f" stroke-width="1.8"/></g>
<path d="M42.6 366.1L46.6 370.5L42.6 374.9z" fill="#fbfcff" stroke="#000" stroke-width="1.25" stroke-linejoin="miter"/>
<g transform="translate(64 365.0)"><rect x="0.5" y="0.5" width="13" height="11" fill="#f0f0fa" stroke="#9b4f96" stroke-width="1"/><path d="M5 1.3v5.4M2.2 4h5.6M9 5.2v5.6M6.2 8h5.6" stroke="#2f2f2f" stroke-width="1.8"/></g>
<path d="M42.6 384.1L46.6 388.5L42.6 392.9z" fill="#fbfcff" stroke="#000" stroke-width="1.25" stroke-linejoin="miter"/>
<g transform="translate(64 383.0)"><rect x="0.5" y="0.5" width="13" height="11" fill="#f0f0fa" stroke="#9b4f96" stroke-width="1"/><path d="M5 1.3v5.4M2.2 4h5.6M9 5.2v5.6M6.2 8h5.6" stroke="#2f2f2f" stroke-width="1.8"/></g>
<path d="M42.6 402.1L46.6 406.5L42.6 410.9z" fill="#fbfcff" stroke="#000" stroke-width="1.25" stroke-linejoin="miter"/>
<g transform="translate(64 401.0)"><rect x="0.5" y="0.5" width="13" height="11" fill="#f0f0fa" stroke="#9b4f96" stroke-width="1"/><path d="M5 1.3v5.4M2.2 4h5.6M9 5.2v5.6M6.2 8h5.6" stroke="#2f2f2f" stroke-width="1.8"/></g>
<path d="M42.6 420.1L46.6 424.5L42.6 428.9z" fill="#fbfcff" stroke="#000" stroke-width="1.25" stroke-linejoin="miter"/>
<g transform="translate(64 419.0)"><rect x="0.5" y="0.5" width="13" height="11" fill="#f0f0fa" stroke="#9b4f96" stroke-width="1"/><path d="M5 1.3v5.4M2.2 4h5.6M9 5.2v5.6M6.2 8h5.6" stroke="#2f2f2f" stroke-width="1.8"/></g>
<path d="M42.6 438.1L46.6 442.5L42.6 446.9z" fill="#fbfcff" stroke="#000" stroke-width="1.25" stroke-linejoin="miter"/>
<g transform="translate(64 437.0)"><rect x="0.5" y="0.5" width="13" height="11" fill="#f0f0fa" stroke="#9b4f96" stroke-width="1"/><path d="M5 1.3v5.4M2.2 4h5.6M9 5.2v5.6M6.2 8h5.6" stroke="#2f2f2f" stroke-width="1.8"/></g>
<path d="M42.6 456.1L46.6 460.5L42.6 464.9z" fill="#fbfcff" stroke="#000" stroke-width="1.25" stroke-linejoin="miter"/>
<g transform="translate(64 455.0)"><rect x="0.5" y="0.5" width="13" height="11" fill="#f0f0fa" stroke="#9b4f96" stroke-width="1"/><path d="M5 1.3v5.4M2.2 4h5.6M9 5.2v5.6M6.2 8h5.6" stroke="#2f2f2f" stroke-width="1.8"/></g>
<path d="M48 475.5V482.0H41.5z" fill="#1e1e1e"/>
<g transform="translate(64 473.0)"><rect x="0.5" y="0.5" width="13" height="11" fill="#f0f0fa" stroke="#9b4f96" stroke-width="1"/><path d="M5 1.3v5.4M2.2 4h5.6M9 5.2v5.6M6.2 8h5.6" stroke="#2f2f2f" stroke-width="1.8"/></g>
<path d="M60.6 492.1L64.6 496.5L60.6 500.9z" fill="#fbfcff" stroke="#000" stroke-width="1.25" stroke-linejoin="miter"/>
<g transform="translate(82 493.0)"><rect x="0" y="1.6" width="3.6" height="4.2" fill="#424242"/><rect x="5" y="3.2" width="1.6" height="1" fill="#424242"/><rect x="8" y="0.4" width="6" height="6.4" fill="#424242"/></g>
<path d="M60.6 510.1L64.6 514.5L60.6 518.9z" fill="#fbfcff" stroke="#000" stroke-width="1.25" stroke-linejoin="miter"/>
<g transform="translate(82 508.5)"><path d="M0.5 0.5h5.5l1.2 1.6H13V10.5H0.5z" fill="#dcb67a"/><path d="M1.4 2h4" stroke="#f1dfb8" stroke-width="1"/><rect x="0.6" y="6.1" width="6" height="6" fill="#f4f8ff" stroke="#1ba1e2" stroke-width="1.2"/><path d="M2.4 10.4l2.6-2.6M2.8 7.8h2.2v2.2" fill="none" stroke="#1ba1e2" stroke-width="1"/></g>
<path d="M66 529.5V536.0H59.5z" fill="#1e1e1e"/>
<g transform="translate(82 526.5)"><path d="M0.7 9.5V0.6h5l1.2 1.5h5.6v2" fill="none" stroke="#dcb67a" stroke-width="1.2"/><path d="M2 11L4.2 4.6H14L11.6 11z" fill="#dcb67a"/><path d="M0 5.4h8L5 8.6v4.6H3V8.6z" fill="#3a3a3a"/></g>
<path d="M78.6 546.1L82.6 550.5L78.6 554.9z" fill="#fbfcff" stroke="#000" stroke-width="1.25" stroke-linejoin="miter"/>
<g transform="translate(101 546.5)"><path d="M3.4 0v6.4M0.2 3.2h6.4M8.6 2v6.4M5.4 5.2h6.4" stroke="#8b4a9e" stroke-width="2"/></g>
<g transform="translate(84 562.5)"><path d="M0.6 0.6h6l3 3v8.8h-9z" fill="#fbfcff" stroke="#3b3b3b" stroke-width="1.2"/><path d="M6.4 0.6v3.2h3.2" fill="none" stroke="#3b3b3b" stroke-width="1"/><path d="M2.4 5.6h5.2M2.4 7.6h5.2M2.4 9.6h5.2" stroke="#3b3b3b" stroke-width="1"/></g>
<path d="M42.6 582.1L46.6 586.5L42.6 590.9z" fill="#fbfcff" stroke="#000" stroke-width="1.25" stroke-linejoin="miter"/>
<g transform="translate(64 581.0)"><rect x="0.5" y="0.5" width="13" height="11" fill="#f0f0fa" stroke="#9b4f96" stroke-width="1"/><path d="M5 1.3v5.4M2.2 4h5.6M9 5.2v5.6M6.2 8h5.6" stroke="#2f2f2f" stroke-width="1.8"/></g>
<path d="M42.6 600.1L46.6 604.5L42.6 608.9z" fill="#fbfcff" stroke="#000" stroke-width="1.25" stroke-linejoin="miter"/>
<g transform="translate(64 599.0)"><rect x="0.5" y="0.5" width="13" height="11" fill="#f0f0fa" stroke="#9b4f96" stroke-width="1"/><path d="M5 1.3v5.4M2.2 4h5.6M9 5.2v5.6M6.2 8h5.6" stroke="#2f2f2f" stroke-width="1.8"/></g>
<path d="M42.6 618.1L46.6 622.5L42.6 626.9z" fill="#fbfcff" stroke="#000" stroke-width="1.25" stroke-linejoin="miter"/>
<g transform="translate(64 617.0)"><rect x="0.5" y="0.5" width="13" height="11" fill="#f0f0fa" stroke="#9b4f96" stroke-width="1"/><path d="M5 1.3v5.4M2.2 4h5.6M9 5.2v5.6M6.2 8h5.6" stroke="#2f2f2f" stroke-width="1.8"/></g>
<path d="M42.6 636.1L46.6 640.5L42.6 644.9z" fill="#fbfcff" stroke="#000" stroke-width="1.25" stroke-linejoin="miter"/>
<g transform="translate(64 635.0)"><rect x="0.5" y="0.5" width="13" height="11" fill="#f0f0fa" stroke="#9b4f96" stroke-width="1"/><path d="M5 1.3v5.4M2.2 4h5.6M9 5.2v5.6M6.2 8h5.6" stroke="#2f2f2f" stroke-width="1.8"/></g>
<rect x="58.4" y="471.2" width="106.2" height="15.6" fill="none" stroke="#f01010" stroke-width="1.7"/>
<path d="M475.0 156.5h9l-4.5 -5z" fill="#868999"/>
<path d="M475.0 645.0h9l-4.5 5z" fill="#868999"/>
<path d="M1898.0 126.0h9l-4.5 -5z" fill="#868999"/>
<path d="M1898.0 650.0h9l-4.5 5z" fill="#868999"/>
<path d="M1898.0 742.0h9l-4.5 -5z" fill="#868999"/>
<path d="M1898.0 959.0h9l-4.5 5z" fill="#868999"/>
<path d="M42.0 973.0v9l-5 -4.5z" fill="#868999"/>
<path d="M1882.5 973.0v9l5 -4.5z" fill="#868999"/>
<path d="M761.5 664.5v9l-5 -4.5z" fill="#c6c8d2"/>
<path d="M1711.5 664.5v9l5 -4.5z" fill="#c6c8d2"/>
<g transform="translate(590 79.5)"><path d="M0 4h3M3.5 0.5v7M3.5 1.5h4.5v4h-4.5M3.5 6h4.5" fill="none" stroke="#4a3508" stroke-width="1"/><path d="M8 1v6" stroke="#4a3508" stroke-width="1.2"/></g>
<path d="M608.5 79.3l9 8M617.5 79.3l-9 8" stroke="#4a3508" stroke-width="1.5"/>
<path d="M1884 81h8l-4 4z" fill="#d3d9ee"/>
<g transform="translate(1901 76)"><circle cx="5" cy="5" r="3" fill="none" stroke="#d3d9ee" stroke-width="1.6"/><path d="M5 0v10M0 5h10M1.5 1.5l7 7M8.5 1.5l-7 7" stroke="#d3d9ee" stroke-width="1.3"/><circle cx="5" cy="5" r="1.4" fill="#5d6b99"/></g>
<g transform="translate(500 97)"><rect x="0.5" y="0.5" width="12" height="11" fill="#f0f0fa" stroke="#9b4f96" stroke-width="1"/><path d="M4.2 2v5M1.8 4.4h5M8.4 5.2v5M6 7.6h5" stroke="#2f2f2f" stroke-width="1.8"/></g>
<path d="M950.5 103h6.5l-3.25 3.3z" fill="#1e1e1e"/>
<path d="M1417 103h6.5l-3.25 3.3z" fill="#1e1e1e"/>
<path d="M1883.8 103h6.5l-3.25 3.3z" fill="#1e1e1e"/>
<g transform="translate(1434 98)"><path d="M5 0.6L9.6 3V8L5 10.6L0.6 8V3z M0.6 3L5 5.4L9.6 3M5 5.4V10.6" fill="none" stroke="#6e2e9c" stroke-width="1.1"/></g>
<g transform="translate(1897 97)"><path d="M0 5.5h11M0 7.5h11" stroke="#111" stroke-width="1"/><path d="M5.5 1v4M5.5 8v4" stroke="#111" stroke-width="1.2"/><path d="M3.6 2.6L5.5 0.6L7.4 2.6M3.6 10.4L5.5 12.4L7.4 10.4" fill="none" stroke="#111" stroke-width="1.2"/></g>
<path d="M548 667h5.5l-2.75 3z" fill="#1e1e1e"/>
<g transform="translate(581 664)"><circle cx="5" cy="5" r="5" fill="#2f9a41"/><path d="M2.4 5.2l1.9 1.9l3.4 -3.8" fill="none" stroke="#fff" stroke-width="1.5"/></g>
<path d="M592.5 130V152H597" fill="none" stroke="#a5a5a5" stroke-width="1"/>
<path d="M592.5 188V248H597" fill="none" stroke="#a5a5a5" stroke-width="1"/>
<path d="M592.5 283V661" fill="none" stroke="#a5a5a5" stroke-width="1"/>
<path d="M592.5 381.5H597M592.5 609.5H597" fill="none" stroke="#a5a5a5" stroke-width="1"/>
<rect x="587.5" y="119.5" width="9" height="9" fill="#fff" stroke="#a5a5a5" stroke-width="1"/><path d="M589.5 123.5h5" stroke="#444" stroke-width="1"/>
<rect x="587.5" y="177.5" width="9" height="9" fill="#fff" stroke="#a5a5a5" stroke-width="1"/><path d="M589.5 181.5h5" stroke="#444" stroke-width="1"/>
<rect x="587.5" y="272.5" width="9" height="9" fill="#fff" stroke="#a5a5a5" stroke-width="1"/><path d="M589.5 276.5h5" stroke="#444" stroke-width="1"/>
<rect x="587.5" y="348.5" width="9" height="9" fill="#fff" stroke="#a5a5a5" stroke-width="1"/><path d="M589.5 352.5h5" stroke="#444" stroke-width="1"/>
<rect x="587.5" y="481.5" width="9" height="9" fill="#fff" stroke="#a5a5a5" stroke-width="1"/><path d="M589.5 485.5h5" stroke="#444" stroke-width="1"/>
<path d="M601.5 288.5V661" stroke="#c4c4c4" stroke-width="1" stroke-dasharray="3 3.8"/>
<path d="M634.5 498V589" stroke="#c4c4c4" stroke-width="1" stroke-dasharray="3 3.8"/>
<path d="M434 717h6.5l-3.25 3.5z" fill="#1e1e1e"/>
<path d="M450.5 709V727" stroke="#8e9bc5" stroke-width="1"/>
<g transform="translate(460 711)"><path d="M7.5 1.2C5 0.2 3.6 2.4 4 6.5" fill="none" stroke="#a6abc4" stroke-width="1.4"/><path d="M1.4 4.2L4 7.4L6.6 4.2" fill="none" stroke="#a6abc4" stroke-width="1.4"/><path d="M2 8.5h11M2 14h10" stroke="#a6abc4" stroke-width="1"/><rect x="2" y="10" width="6" height="2.4" fill="#a6abc4"/></g>
<path d="M480.5 709V727" stroke="#8e9bc5" stroke-width="1"/>
<g transform="translate(490 711)"><path d="M6.5 6.5h5.5" stroke="#3b3b3b" stroke-width="1"/><path d="M2 9h10M2 11.8h10" stroke="#3b3b3b" stroke-width="1.6"/><path d="M1 4h6.5" stroke="#00539c" stroke-width="2"/><path d="M4.2 0.8L1 4L4.2 7.2" fill="none" stroke="#00539c" stroke-width="1.8"/></g>
<g transform="translate(512 711)"><path d="M7.5 6.5h4.5" stroke="#3b3b3b" stroke-width="1"/><path d="M2 9h10M2 11.8h10" stroke="#3b3b3b" stroke-width="1.6"/><path d="M0 4h6.5" stroke="#00539c" stroke-width="2"/><path d="M3.3 0.8L6.5 4L3.3 7.2" fill="none" stroke="#00539c" stroke-width="1.8"/></g>
<path d="M532.5 709V727" stroke="#8e9bc5" stroke-width="1"/>
<g transform="translate(540 711)"><path d="M8 1.6h6M8 5.2h6M2 9.2h12M2 13h12" stroke="#3b3b3b" stroke-width="1.7"/><path d="M1 0.4l5.6 5.8M6.6 0.4L1 6.2" stroke="#c8391f" stroke-width="2"/></g>
<path d="M562.5 709V727" stroke="#8e9bc5" stroke-width="1"/>
<g transform="translate(570 711)"><text x="-0.3" y="6.6" font-family="Liberation Sans, sans-serif" font-size="7.5" font-weight="bold" fill="#3b3b3b">ab</text><text x="-0.3" y="12.8" font-family="Liberation Sans, sans-serif" font-size="7.5" font-weight="bold" fill="#3b3b3b">c</text><path d="M10.5 4h3.6v6H8" fill="none" stroke="#3b3b3b" stroke-width="1.7"/><path d="M9.6 6.8L6.6 10l3 3.2" fill="none" stroke="#3b3b3b" stroke-width="1.7"/></g></svg>
</div></body></html>
